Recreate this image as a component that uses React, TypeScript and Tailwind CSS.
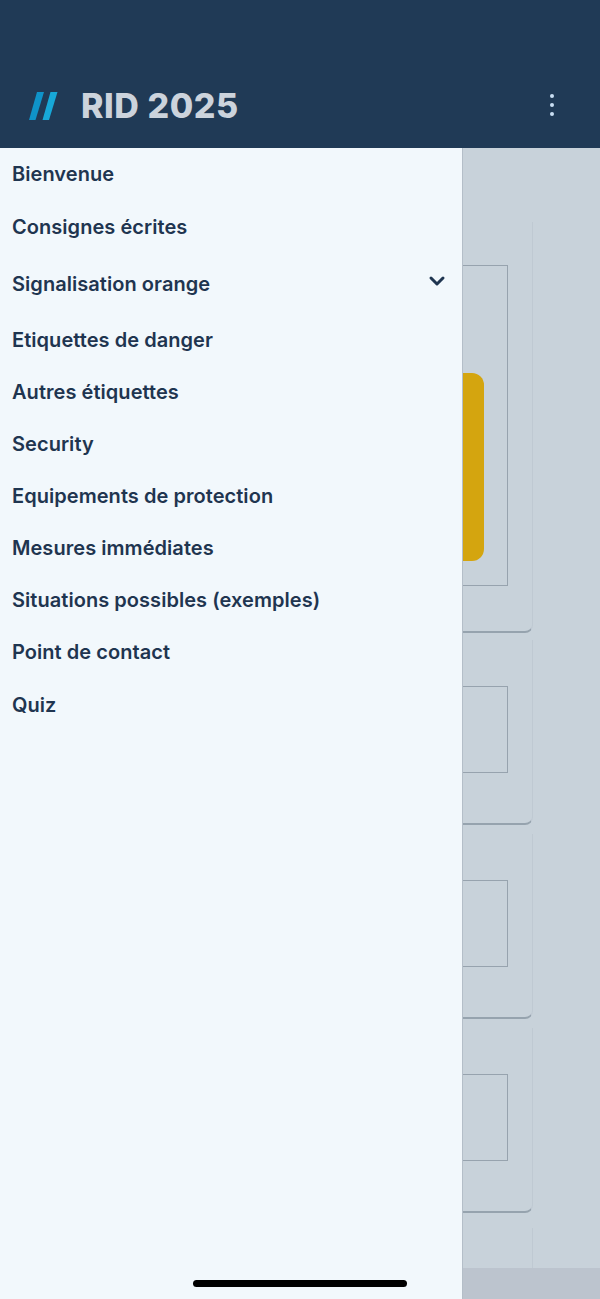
import { ChevronDown } from 'lucide-react'

const MENU_ITEMS = [
  { label: 'Bienvenue', height: 'h-[52px]' },
  { label: 'Consignes écrites', height: 'h-[53px]' },
  { label: 'Signalisation orange', height: 'h-[61px]', expandable: true },
  { label: 'Etiquettes de danger', height: 'h-[52px]' },
  { label: 'Autres étiquettes', height: 'h-[52px]' },
  { label: 'Security', height: 'h-[52px]' },
  { label: 'Equipements de protection', height: 'h-[52px]' },
  { label: 'Mesures immédiates', height: 'h-[52px]' },
  { label: 'Situations possibles (exemples)', height: 'h-[52px]' },
  { label: 'Point de contact', height: 'h-[52px]' },
  { label: 'Quiz', height: 'h-[53px]' },
]

function Logo() {
  return (
    <svg width="30" height="30" viewBox="0 0 30 30" className="shrink-0">
      <polygon points="0,29 6.500,29 15,1 8,1" fill="#0f93c9" />
      <polygon points="13.500,29 20,29 28.500,1 21.500,1" fill="#17a8d8" />
    </svg>
  )
}

function SmallCard() {
  return (
    <div className="h-[185px] shrink-0 rounded-br-lg border-r border-b-2 border-r-[#bfc9d2] border-b-[#96a3ae] pt-[46px] pr-[24px]">
      <div className="h-[87px] border border-[#97a3ae]" />
    </div>
  )
}

export default function App() {
  return (
    <div className="relative flex h-[1299px] w-[600px] flex-col overflow-hidden bg-[#c8d2da] font-['Inter',sans-serif]">
      <header className="flex h-[148px] shrink-0 items-end bg-[#203a56] pr-[46px] pb-[27px] pl-[29px]">
        <Logo />
        <h1 className="ml-[22px] flex-1 text-[34px] leading-[30px] font-extrabold tracking-[0.55px] text-[#ccd3dc]">
          RID 2025
        </h1>
        <div className="mb-[5px] flex flex-col gap-[5px]">
          <span className="h-[4px] w-[4px] rounded-full bg-[#c9def3]" />
          <span className="h-[4px] w-[4px] rounded-full bg-[#c9def3]" />
          <span className="h-[4px] w-[4px] rounded-full bg-[#c9def3]" />
        </div>
      </header>

      <main className="flex min-h-0 flex-1 flex-col gap-[7px] overflow-hidden pt-[74px] pr-[67px] pl-[68px]">
        <div className="h-[411px] shrink-0 rounded-br-lg border-r border-b-2 border-r-[#bfc9d2] border-b-[#96a3ae] pt-[43px] pr-[24px]">
          <div className="h-[321px] border border-[#97a3ae] pt-[107px] pr-[23px]">
            <div className="ml-auto h-[188px] w-[100px] rounded-xl bg-[#d4a50f]" />
          </div>
        </div>
        <SmallCard />
        <div className="mt-[2px]"><SmallCard /></div>
        <div className="mt-[2px]"><SmallCard /></div>
        <div className="mt-[8px] h-[60px] shrink-0 border-r border-r-[#bfc9d2]" />
      </main>

      <div className="h-[31px] shrink-0 bg-[#bcc4ce]" />

      <nav className="absolute top-[148px] bottom-0 left-0 w-[463px] border-r border-r-[#b4bec8] bg-[#f2f8fc]">
        {MENU_ITEMS.map((item) => (
          <div
            key={item.label}
            className={`flex items-center justify-between pr-[13px] pl-[12px] text-[20px] font-semibold tracking-[0.05px] text-[#1f3550] ${item.height}`}
          >
            <span>{item.label}</span>
            {item.expandable && (
              <ChevronDown className="mb-[6px] h-[24px] w-[24px]" strokeWidth={3} />
            )}
          </div>
        ))}
      </nav>

      <div className="absolute bottom-[12px] left-[193px] h-[7px] w-[214px] rounded-full bg-black" />
    </div>
  )
}
